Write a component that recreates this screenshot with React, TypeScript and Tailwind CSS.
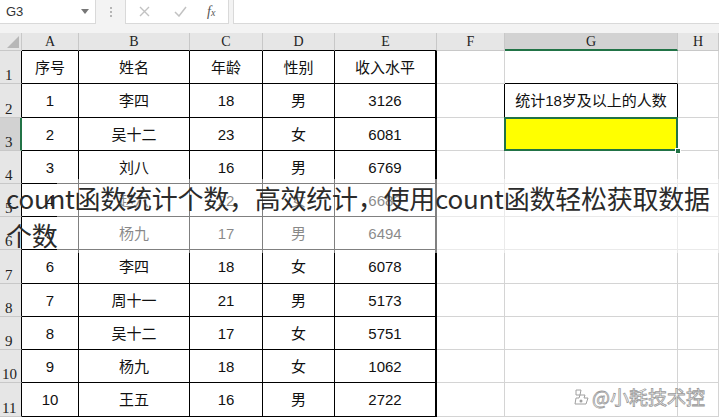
import React from 'react';

// column widths in px: row header, A..H
const colWidths = [22, 57, 111, 73, 72, 102, 68, 173, 41];
const colLetters = ['', 'A', 'B', 'C', 'D', 'E', 'F', 'G', 'H'];
const rowHeights = [33, 34, 33, 33, 33, 33, 34, 33, 33, 33, 34];

const data: string[][] = [
  ['序号', '姓名', '年龄', '性别', '收入水平'],
  ['1', '李四', '18', '男', '3126'],
  ['2', '吴十二', '23', '女', '6081'],
  ['3', '刘八', '16', '男', '6769'],
  ['4', '赵六', '22', '女', '6683'],
  ['5', '杨九', '17', '男', '6494'],
  ['6', '李四', '18', '女', '6078'],
  ['7', '周十一', '21', '男', '5173'],
  ['8', '吴十二', '17', '女', '5751'],
  ['9', '杨九', '18', '女', '1062'],
  ['10', '王五', '16', '男', '2722'],
];

const cellFont = { fontFamily: '"Liberation Sans", "Noto Sans CJK SC", sans-serif' };
const serifFont = { fontFamily: '"Liberation Serif", "Noto Sans CJK SC", serif' };

const FormulaBar: React.FC = () => (
  <div className="flex h-[33px] bg-[#f3f3f3]">
    <div className="flex h-[24px] w-[96px] items-center justify-between bg-white pl-[6px] pr-[6px] border-b border-r border-[#d9d9d9]">
      <span className="text-[13px] text-[#333]" style={cellFont}>G3</span>
      <svg width="8" height="5" viewBox="0 0 8 5"><path d="M0 0h8L4 5z" fill="#777" /></svg>
    </div>
    <div className="flex w-[29px] h-[24px] items-center justify-center">
      <div className="flex flex-col gap-[2px]">
        <span className="block h-[2px] w-[2px] bg-[#b5b5b5]" />
        <span className="block h-[2px] w-[2px] bg-[#b5b5b5]" />
        <span className="block h-[2px] w-[2px] bg-[#b5b5b5]" />
      </div>
    </div>
    <div className="flex h-[24px] w-[104px] items-center bg-white border-b border-x border-[#d9d9d9]">
      <svg className="ml-[13px]" width="11" height="11" viewBox="0 0 11 11">
        <path d="M1 1l9 9M10 1l-9 9" stroke="#c2c2c2" strokeWidth="1.4" />
      </svg>
      <svg className="ml-[24px]" width="13" height="11" viewBox="0 0 13 11">
        <path d="M1 6l4 4 7-9" stroke="#c2c2c2" strokeWidth="1.5" fill="none" />
      </svg>
      <span className="ml-[20px] text-[14px] italic text-[#555]" style={serifFont}>
        f<span className="text-[10px]">x</span>
      </span>
    </div>
    <div className="ml-[4px] h-[24px] flex-1 bg-white border-b border-l border-[#d9d9d9]" />
  </div>
);

const ColumnHeader: React.FC = () => (
  <div className="flex h-[18px]">
    {colWidths.map((w, i) => {
      const selected = i === 7;
      const dark = i >= 1 && i <= 5;
      return (
        <div
          key={i}
          style={{ width: w, ...serifFont }}
          className={`relative flex shrink-0 items-center justify-center text-[14px] text-[#222] border-r border-[#c8c8c8] ${
            selected
              ? 'bg-[#d2d2d2] border-b-2 border-b-[#217346]'
              : dark
              ? 'bg-[#e6e6e6] border-b border-b-black'
              : 'bg-[#e6e6e6] border-b border-b-[#c8c8c8]'
          }`}
        >
          {i === 0 ? (
            <svg className="absolute right-[2px] bottom-[2px]" width="12" height="12" viewBox="0 0 12 12">
              <path d="M12 0v12H0z" fill="#b7b7b7" />
            </svg>
          ) : (
            colLetters[i]
          )}
        </div>
      );
    })}
  </div>
);

const Row: React.FC<{ index: number; height: number }> = ({ index, height }) => {
  const rowNo = index + 1;
  const values = data[index];
  return (
    <div className="flex" style={{ height }}>
      {colWidths.map((w, i) => {
        if (i === 0) {
          const sel = rowNo === 3;
          return (
            <div
              key={i}
              style={{ width: w, ...serifFont }}
              className={`flex shrink-0 items-end text-[15px] leading-[15px] text-[#222] border-b border-b-[#c8c8c8] ${
                rowNo >= 10 ? 'pl-[2px]' : 'pl-[5px]'
              } ${sel ? 'bg-[#d2d2d2] border-r-2 border-r-[#217346]' : 'bg-[#e6e6e6] border-r border-r-black'}`}
            >
              {rowNo}
            </div>
          );
        }
        if (i <= 5) {
          return (
            <div
              key={i}
              style={{ width: w, ...cellFont }}
              className={`flex shrink-0 items-center justify-center pt-[2px] text-[15px] text-[#111] border-b border-black ${
                i === 5 ? 'border-r-2' : 'border-r'
              }`}
            >
              {values[i - 1]}
            </div>
          );
        }
        if (i === 6) {
          const edge = rowNo === 2 || rowNo === 3;
          return (
            <div
              key={i}
              style={{ width: w }}
              className={`shrink-0 border-b border-b-[#d4d4d4] border-r ${edge ? 'border-r-black' : 'border-r-[#d4d4d4]'}`}
            />
          );
        }
        if (i === 7) {
          if (rowNo === 2) {
            return (
              <div
                key={i}
                style={{ width: w, ...cellFont }}
                className="flex shrink-0 items-center justify-center pt-[2px] text-[15px] text-[#111] border-b border-r border-black"
              >
                统计18岁及以上的人数
              </div>
            );
          }
          if (rowNo === 3) {
            return (
              <div key={i} style={{ width: w }} className="relative shrink-0 bg-[#ffff00] border-b border-r border-black">
                <div className="absolute -left-[1px] -top-[1px] -right-[1px] -bottom-[1px] border-2 border-[#217346]" />
                <div className="absolute -right-[4px] -bottom-[4px] h-[6px] w-[6px] bg-[#217346] border border-white" />
              </div>
            );
          }
          return (
            <div
              key={i}
              style={{ width: w }}
              className={`shrink-0 border-r border-r-[#d4d4d4] border-b ${rowNo === 1 ? 'border-b-black' : 'border-b-[#d4d4d4]'}`}
            />
          );
        }
        return <div key={i} style={{ width: w }} className="shrink-0 border-r border-b border-[#d4d4d4]" />;
      })}
    </div>
  );
};

const Watermark: React.FC = () => (
  <div className="absolute left-[573px] top-[387px] flex items-center gap-[2px]">
    <svg width="17" height="18" viewBox="0 0 17 18">
      <path
        d="M3 2h5l-1 5h5l-1 3h4l-2 6H2l1-6h3l1-3H3z"
        fill="white"
        stroke="#a0a0a0"
        strokeWidth="1"
        strokeLinejoin="round"
      />
      <circle cx="8" cy="13" r="1.5" fill="#a0a0a0" />
    </svg>
    <span
      className="text-[19px] leading-none text-white [-webkit-text-stroke:0.8px_#9a9a9a]"
      style={{ fontFamily: '"Noto Sans CJK SC", sans-serif' }}
    >
      @小耗技术控
    </span>
  </div>
);

const App: React.FC = () => {
  return (
    <div className="relative h-[417px] w-[719px] overflow-hidden bg-white">
      <FormulaBar />
      <ColumnHeader />
      {rowHeights.map((h, idx) => (
        <Row key={idx} index={idx} height={h} />
      ))}

      {/* faded band behind the caption */}
      <div className="absolute left-[57px] top-[179px] h-[74px] w-[662px] bg-white/50" />

      {/* caption over the sheet */}
      <div
        className="absolute left-0 top-[179px] w-[719px] pl-[6px] text-[26px] leading-[37px] tracking-[-0.25px] text-[#2b2b2b]"
        style={{ fontFamily: '"Noto Sans CJK SC", sans-serif' }}
      >
        count函数统计个数，高效统计，使用count函数轻松获取数据个数
      </div>

      <Watermark />
    </div>
  );
};

export default App;
